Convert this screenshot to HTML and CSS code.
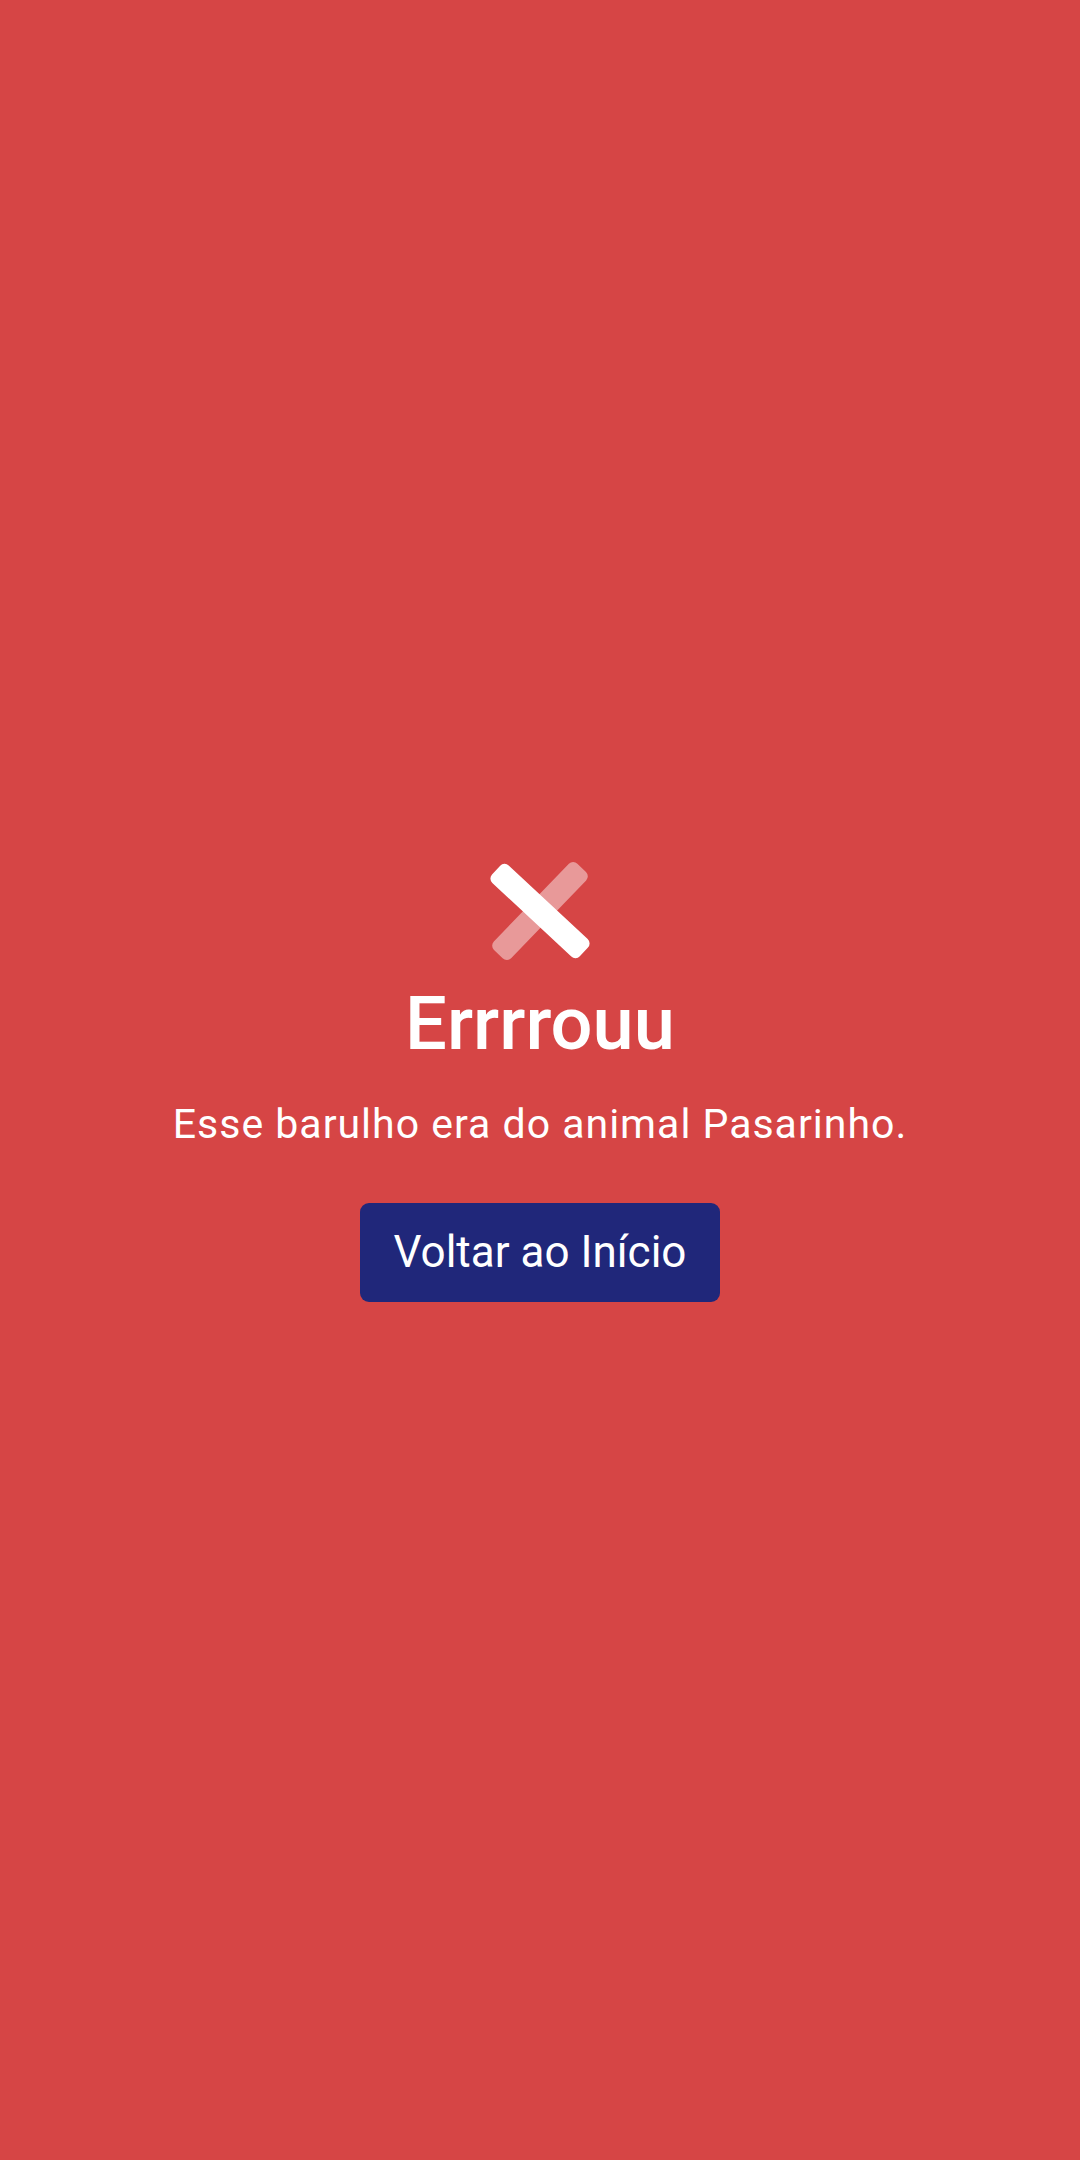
FILE: index.html
```html
<!DOCTYPE html>
<html lang="pt">
<head>
<meta charset="utf-8">
<title>Errrrouu</title>
<link rel="stylesheet" href="styles.css">
</head>
<body>
<main class="screen">
  <svg class="icon" viewBox="0 0 104 104" width="104" height="104" aria-hidden="true">
    <rect x="-8" y="40" width="120" height="24" rx="6" fill="#ffffff" fill-opacity="0.45" transform="rotate(-46 52 52)"/>
    <rect x="-8" y="40" width="120" height="24" rx="6" fill="#ffffff" transform="rotate(43 52 52)"/>
  </svg>
  <h1 class="title">Errrrouu</h1>
  <p class="message">Esse barulho era do animal Pasarinho.</p>
  <button class="back-btn" type="button">Voltar ao Início</button>
</main>
</body>
</html>
```
FILE: styles.css
```css
html, body {
  margin: 0;
  padding: 0;
  background: #d64545;
}

.screen {
  min-height: 100vh;
  display: flex;
  flex-direction: column;
  align-items: center;
  justify-content: center;
  font-family: Roboto, "Noto Sans", sans-serif;
  color: #ffffff;
}

.icon {
  display: block;
}

.title {
  margin: 24px 0 0;
  font-size: 74px;
  line-height: 74px;
  font-weight: 500;
}

.message {
  margin: 43px 0 0;
  font-size: 41px;
  line-height: 40px;
  font-weight: 400;
  letter-spacing: 1px;
}

.back-btn {
  margin-top: 59px;
  background: #20277a;
  color: #ffffff;
  border: none;
  border-radius: 9px;
  font-family: Roboto, "Noto Sans", sans-serif;
  font-size: 44px;
  line-height: 44px;
  padding: 27px 34px 28px;
  cursor: pointer;
}
```
